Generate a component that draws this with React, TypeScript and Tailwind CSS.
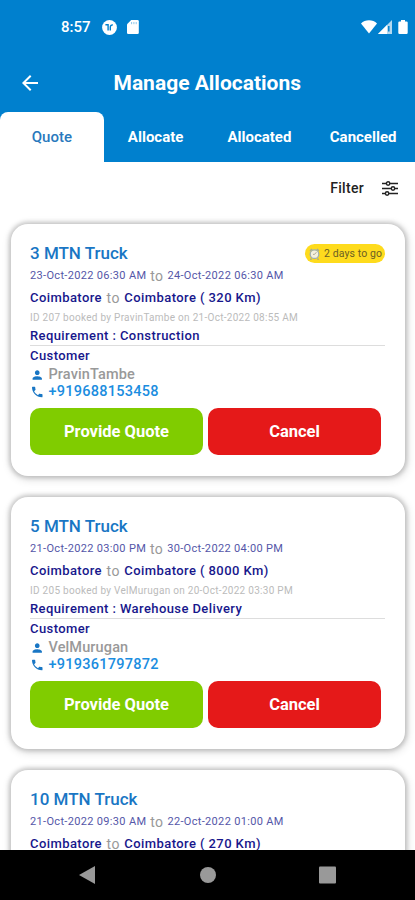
import { MdArrowBack, MdPerson, MdPhone } from 'react-icons/md';

type Allocation = {
  id: number;
  truck: string;
  start: string;
  end: string;
  from: string;
  to: string;
  distance: string;
  booked: string;
  requirement: string;
  customer: string;
  phone: string;
  due?: string;
};

const tabs = ['Quote', 'Allocate', 'Allocated', 'Cancelled'];

const allocations: Allocation[] = [
  {
    id: 207,
    truck: '3 MTN Truck',
    start: '23-Oct-2022 06:30 AM',
    end: '24-Oct-2022 06:30 AM',
    from: 'Coimbatore',
    to: 'Coimbatore',
    distance: '320 Km',
    booked: 'PravinTambe on 21-Oct-2022 08:55 AM',
    requirement: 'Construction',
    customer: 'PravinTambe',
    phone: '+919688153458',
    due: '2 days to go',
  },
  {
    id: 205,
    truck: '5 MTN Truck',
    start: '21-Oct-2022 03:00 PM',
    end: '30-Oct-2022 04:00 PM',
    from: 'Coimbatore',
    to: 'Coimbatore',
    distance: '8000 Km',
    booked: 'VelMurugan on 20-Oct-2022 03:30 PM',
    requirement: 'Warehouse Delivery',
    customer: 'VelMurugan',
    phone: '+919361797872',
  },
  {
    id: 204,
    truck: '10 MTN Truck',
    start: '21-Oct-2022 09:30 AM',
    end: '22-Oct-2022 01:00 AM',
    from: 'Coimbatore',
    to: 'Coimbatore',
    distance: '270 Km',
    booked: 'VelMurugan on 20-Oct-2022 03:10 PM',
    requirement: 'Construction',
    customer: 'VelMurugan',
    phone: '+919361797872',
  },
];

function StatusBar() {
  return (
    <div className="flex h-[54px] items-center pl-[61px] pr-[7px] text-white">
      <span className="text-[15px] font-medium leading-none">8:57</span>
      <svg className="ml-[11px] h-[15px] w-[15px]" viewBox="0 0 15 15">
        <circle cx="7.5" cy="7.5" r="7.4" fill="white" />
        <path d="M3.400 4.800h2.700v5.600M8.300 10.600V6.900a2 2 0 0 1 2.500-1.900" fill="none" stroke="#0080ce" strokeWidth="1.400" />
      </svg>
      <svg className="ml-[10px] h-[14px] w-[12px]" viewBox="0 0 12 14">
        <path d="M4.200 0H10.500a1.300 1.300 0 0 1 1.300 1.300V12.700a1.300 1.300 0 0 1-1.300 1.300H1.300A1.300 1.300 0 0 1 0 12.700V4.200z" fill="white" />
        <path d="M4.600 2v2.200M6.900 2v2.200M9.200 2v2.200" stroke="#0080ce" strokeOpacity=".45" />
      </svg>
      <svg className="ml-auto h-[14px] w-4" viewBox="0 0 16 14">
        <path d="M0 3.600C4-.8 12-.8 16 3.600L8 13.600z" fill="white" />
      </svg>
      <svg className="ml-px h-[14px] w-[14px]" viewBox="0 0 14 14">
        <path d="M14 0v14H0z" fill="white" fillOpacity=".7" />
        <path d="M9 5v9H0z" fill="white" />
        <path d="M10.800 6v5.500" stroke="#0080ce" strokeWidth="1.500" />
      </svg>
      <svg className="ml-[6px] h-[14px] w-[10px]" viewBox="0 0 10 14">
        <path d="M3 0h4v1.400h1.500A1.200 1.200 0 0 1 9.700 2.600v10.200A1.200 1.200 0 0 1 8.500 14h-7A1.200 1.200 0 0 1 .3 12.800V2.600a1.200 1.200 0 0 1 1.200-1.200H3z" fill="white" />
      </svg>
    </div>
  );
}

function Header() {
  return (
    <header className="h-[162px] shrink-0 bg-[#0080ce]">
      <StatusBar />
      <div className="flex h-[58px] items-center pl-[18px] text-white">
        <MdArrowBack className="h-6 w-6" />
        <h1 className="ml-[71.500px] whitespace-nowrap pt-[2px] text-[21px] font-bold">Manage Allocations</h1>
      </div>
      <nav className="flex h-[50px]">
        {tabs.map((tab, index) => (
          <button
            key={tab}
            className={
              index === 0
                ? 'w-[104px] rounded-t-lg bg-white text-[15px] font-medium text-[#2979bd]'
                : 'w-[104px] text-[15px] font-bold text-white'
            }
          >
            {tab}
          </button>
        ))}
      </nav>
    </header>
  );
}

function FilterIcon() {
  return (
    <svg className="h-4 w-4" viewBox="0 0 16 16" fill="none" stroke="#222" strokeWidth="1.400">
      <path d="M0 2.500h4.200M8 2.500h8M0 7.500h9M13 7.500h3M0 12.500h3.200M7 12.500h9" />
      <circle cx="6.100" cy="2.500" r="1.700" />
      <circle cx="11" cy="7.500" r="1.700" />
      <circle cx="5.100" cy="12.500" r="1.700" />
    </svg>
  );
}

function DueBadge({ label }: { label: string }) {
  return (
    <span className="flex h-[19px] w-20 items-center rounded-full bg-[#fedb1d] pl-1 text-[10.500px] tracking-[0.1px] text-[#6b5e25]">
      <svg className="mr-1 h-3 w-[11px]" viewBox="0 0 11 12">
        <path d="M1 3l2-2M10 3L8 1M2.500 10.500L1.500 12M8.500 10.500l1 1.500" stroke="#a5aa92" strokeWidth="1.400" />
        <circle cx="5.500" cy="6.200" r="4.300" fill="#f4f1df" stroke="#9fb0b0" strokeWidth="1.300" />
        <path d="M5.500 6.400L7.400 4.200M5.500 6.400H4" stroke="#a09884" strokeWidth=".8" />
      </svg>
      <span className="whitespace-nowrap">{label}</span>
    </span>
  );
}

function AllocationCard({ item }: { item: Allocation }) {
  return (
    <article className="h-[252px] shrink-0 rounded-[17px] bg-white pl-[19px] pr-5 pt-[18px] shadow-[0_0_4px_2px_rgba(0,0,0,0.18),1px_2px_9px_2px_rgba(0,0,0,0.12)]">
      <div className="flex h-[23px] items-center justify-between">
        <h2 className="text-[17px] font-medium text-[#1976c4]">{item.truck}</h2>
        {item.due && <DueBadge label={item.due} />}
      </div>
      <p className="flex h-[22px] items-center gap-[4px] whitespace-nowrap text-[11px] tracking-[0.33px] text-[#5456a8]">
        <span>{item.start}</span>
        <span className="text-sm text-[#999]">to</span>
        <span>{item.end}</span>
      </p>
      <p className="flex h-[21px] items-center gap-[4.500px] whitespace-nowrap text-[13px] font-medium tracking-[0.42px] text-[#17178c]">
        <span>{item.from}</span>
        <span className="text-sm font-normal text-[#999]">to</span>
        <span>{item.to} ( {item.distance})</span>
      </p>
      <p className="flex h-[18px] items-center whitespace-nowrap text-[10px] tracking-[0.28px] text-[#bbb]">
        ID {item.id} booked by {item.booked}
      </p>
      <p className="h-[20px] whitespace-nowrap border-b border-[#ddd] text-[13px] font-medium leading-5 tracking-[0.41px] text-[#17178c]">
        Requirement : {item.requirement}
      </p>
      <p className="h-5 text-[13px] font-medium leading-5 tracking-[0.41px] text-[#17178c]">Customer</p>
      <p className="flex h-[17px] items-center text-[14.500px] font-medium tracking-[0.12px] text-[#999]">
        <MdPerson className="mr-1 h-[14px] w-[14.500px] text-[#1976c4]" />
        {item.customer}
      </p>
      <p className="flex h-[17px] items-center text-[14.500px] font-medium tracking-[0.25px] text-[#1b8de0]">
        <MdPhone className="mr-1 h-[14px] w-[14.500px] text-[#1976c4]" />
        {item.phone}
      </p>
      <div className="mt-2 flex gap-[5px] text-[16.500px] font-bold text-white">
        <button className="h-[47px] w-[173px] rounded-[10px] bg-[#80cc00] pt-[2px]">Provide Quote</button>
        <button className="h-[47px] w-[173px] rounded-[10px] bg-[#e51919] pt-[2px]">Cancel</button>
      </div>
    </article>
  );
}

function NavigationBar() {
  return (
    <footer className="flex h-[50px] shrink-0 items-center justify-center bg-black">
      <svg className="h-[18px] w-[257px]" viewBox="0 0 257 18" fill="#999">
        <path d="M16 0v18L0 9z" />
        <circle cx="129" cy="9" r="8" />
        <rect x="240" y=".5" width="17" height="17" rx="1" />
      </svg>
    </footer>
  );
}

export default function App() {
  return (
    <div className="flex h-[900px] w-[415px] flex-col overflow-hidden bg-white font-['Roboto',sans-serif]">
      <Header />
      <main className="flex min-h-0 flex-1 flex-col overflow-hidden">
        <div className="flex h-[53px] shrink-0 items-center justify-end gap-[18px] pr-[17px] text-[14px] font-medium tracking-[0.3px] text-[#222]">
          <span>Filter</span>
          <FilterIcon />
        </div>
        <section className="flex flex-col gap-[21px] pl-[11px] pr-[10px] pt-[9px]">
          {allocations.map((item) => (
            <AllocationCard key={item.id} item={item} />
          ))}
        </section>
      </main>
      <NavigationBar />
    </div>
  );
}
